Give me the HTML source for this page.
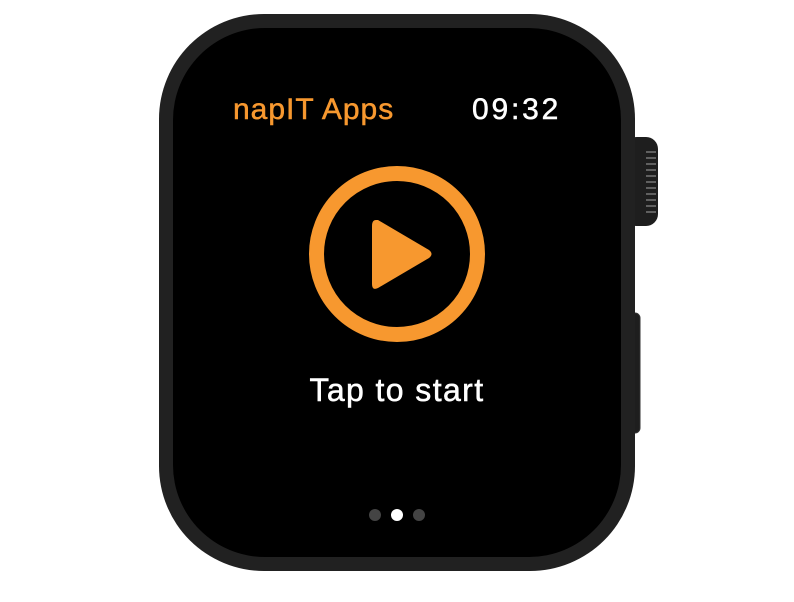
<!DOCTYPE html>
<html><head><style>
html,body{margin:0;padding:0;background:#fff;width:794px;height:602px;overflow:hidden;font-family:"Liberation Sans",sans-serif}
.t{position:absolute;white-space:nowrap;-webkit-text-stroke:0.5px currentColor}
</style></head><body>
<svg width="794" height="602" style="position:absolute;left:0;top:0">
<rect x="625" y="137" width="33" height="89" rx="12" fill="#1e1e1e"/>
<g stroke="#777" stroke-width="1.5">
<line x1="646" y1="152" x2="656" y2="152"/><line x1="646" y1="158" x2="656" y2="158"/><line x1="646" y1="164" x2="656" y2="164"/><line x1="646" y1="170" x2="656" y2="170"/><line x1="646" y1="176" x2="656" y2="176"/><line x1="646" y1="182" x2="656" y2="182"/><line x1="646" y1="188" x2="656" y2="188"/><line x1="646" y1="194" x2="656" y2="194"/><line x1="646" y1="200" x2="656" y2="200"/><line x1="646" y1="206" x2="656" y2="206"/><line x1="646" y1="212" x2="656" y2="212"/>
</g>
<rect x="628" y="313" width="12" height="120" rx="5" fill="#1e1e1e" stroke="#333" stroke-width="1"/>
<rect x="159" y="14" width="476" height="557" rx="105" fill="#212121"/>
<rect x="173" y="28" width="448" height="529" rx="92" fill="#000"/>
<circle cx="397" cy="254" r="80.5" fill="none" stroke="#f7982f" stroke-width="15"/>
<path d="M376 220 Q372 220 372 226 L372 284 Q372 291 378 288 L429 258 Q434 254 429 250 L378 220 Z" fill="#f7982f"/>
<circle cx="375" cy="515" r="6" fill="#444"/>
<circle cx="397" cy="515" r="6" fill="#fff"/>
<circle cx="419" cy="515" r="6" fill="#444"/>
</svg>
<div class="t" style="left:233px;top:93px;color:#f7982f;font-size:30px;letter-spacing:1px">napIT Apps</div>
<div class="t" style="left:472px;top:93px;color:#fff;font-size:30px;letter-spacing:2.8px">09:32</div>
<div class="t" style="left:0;width:794px;text-align:center;top:372px;color:#fff;font-size:32px;letter-spacing:1.4px">Tap to start</div>
</body></html>
